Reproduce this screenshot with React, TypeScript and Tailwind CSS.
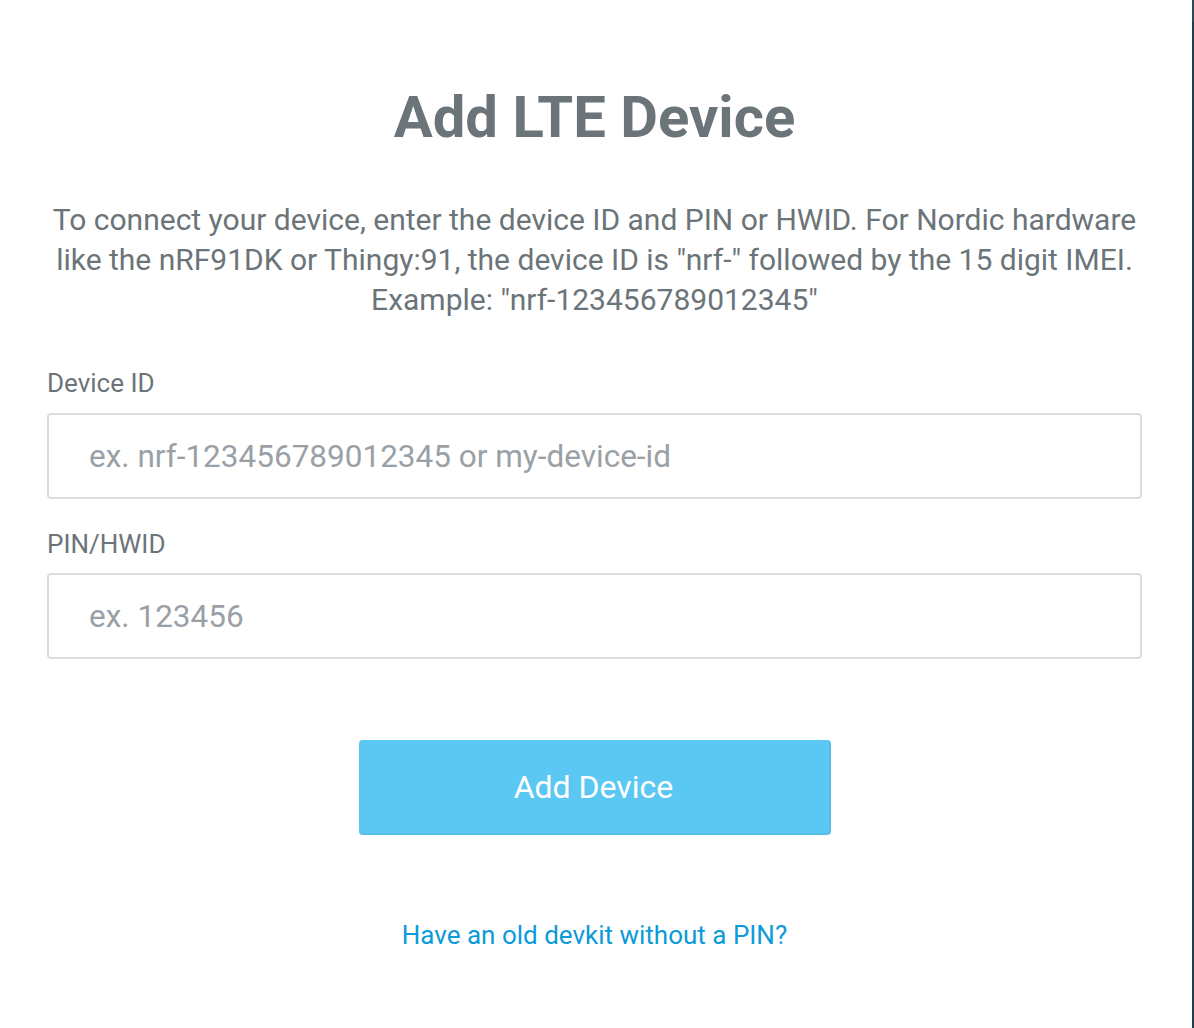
export default function App() {
  return (
    <div className="flex min-h-[1028px] w-full bg-white font-['Roboto',sans-serif]">
      {/* main panel */}
      <div className="flex-1 pl-[47px] pr-[50px] pt-[83px]">
        <h1 className="text-center text-[58px] leading-[68px] font-bold text-[#6b7479]">
          Add LTE Device
        </h1>

        <p className="mt-[49px] text-center text-[30px] leading-[40px] text-[#6b7479]">
          To connect your device, enter the device ID and PIN or HWID. For Nordic hardware
          <br />
          like the nRF91DK or Thingy:91, the device ID is "nrf-" followed by the 15 digit IMEI.
          <br />
          Example: "nrf-123456789012345"
        </p>

        <form className="mt-[48px] flex flex-col" onSubmit={(e) => e.preventDefault()}>
          <label className="text-[26px] leading-[30px] text-[#6b7479]">Device ID</label>
          <input
            className="mt-[15px] h-[86px] rounded-[4px] border-2 border-[#dcdcdc] px-[40px] text-[31.5px] text-[#6b7479] outline-none placeholder:text-[#9aa1a6]"
            placeholder="ex. nrf-123456789012345 or my-device-id"
          />

          <label className="mt-[30px] text-[26px] leading-[30px] text-[#6b7479]">PIN/HWID</label>
          <input
            className="mt-[14px] h-[86px] rounded-[4px] border-2 border-[#dcdcdc] px-[40px] text-[31.5px] text-[#6b7479] outline-none placeholder:text-[#9aa1a6]"
            placeholder="ex. 123456"
          />

          <div className="mt-[81px] flex justify-center">
            <button
              type="submit"
              className="h-[95px] w-[472px] rounded-[4px] border-r-2 border-b-2 border-[#55bde8] bg-[#5bc8f4] text-[32px] text-white"
            >
              Add Device
            </button>
          </div>

          <div className="mt-[85px] text-center">
            <a href="#" className="text-[26px] leading-[30px] text-[#0b9bd9]">
              Have an old devkit without a PIN?
            </a>
          </div>
        </form>
      </div>

      {/* edge of neighbouring panel */}
      <div className="flex w-[2px] flex-col">
        <div className="h-[22px] bg-[#2e4856]" />
        <div className="flex-1 bg-[#213d4b]" />
      </div>
    </div>
  );
}
